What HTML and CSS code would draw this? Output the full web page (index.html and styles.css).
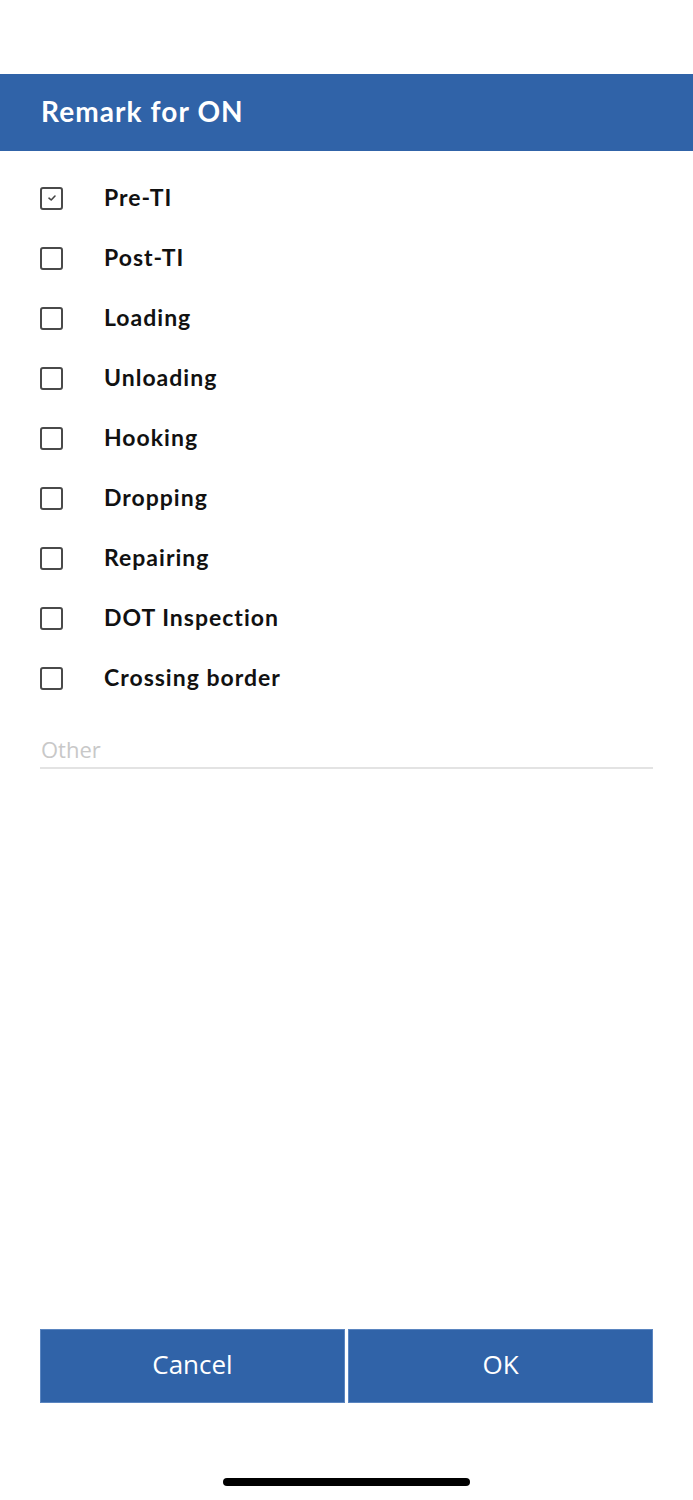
FILE: index.html
```html
<!DOCTYPE html>
<html lang="en">
<head>
    <meta charset="UTF-8">
    <meta name="viewport" content="width=device-width, initial-scale=1.0">
    <title>Remark for ON</title>
    <link rel="stylesheet" href="styles.css">
</head>
<body>
    <div class="screen">
        <div class="header">
            <div class="header-title">Remark for ON</div>
        </div>

        <div class="remark-list">
            <label class="remark-row">
                <span class="box checked">
                    <svg viewBox="0 0 10 10" width="10" height="10"><path d="M2 5.2 L4.2 7 L8 3" fill="none" stroke="#444" stroke-width="1.6" stroke-linecap="round" stroke-linejoin="round"/></svg>
                </span>
                <span class="remark-text">Pre-TI</span>
            </label>
            <label class="remark-row"><span class="box"></span><span class="remark-text">Post-TI</span></label>
            <label class="remark-row"><span class="box"></span><span class="remark-text">Loading</span></label>
            <label class="remark-row"><span class="box"></span><span class="remark-text">Unloading</span></label>
            <label class="remark-row"><span class="box"></span><span class="remark-text">Hooking</span></label>
            <label class="remark-row"><span class="box"></span><span class="remark-text">Dropping</span></label>
            <label class="remark-row"><span class="box"></span><span class="remark-text">Repairing</span></label>
            <label class="remark-row"><span class="box"></span><span class="remark-text">DOT Inspection</span></label>
            <label class="remark-row"><span class="box"></span><span class="remark-text">Crossing border</span></label>
        </div>

        <div class="other-field">
            <input type="text" placeholder="Other">
        </div>

        <div class="spacer"></div>

        <div class="actions">
            <button class="btn">Cancel</button>
            <button class="btn">OK</button>
        </div>

        <div class="home-bar"></div>
    </div>
</body>
</html>
```

FILE: styles.css
```css
* {
    margin: 0;
    padding: 0;
    box-sizing: border-box;
}

body {
    background: #fff;
    font-family: 'Lato', sans-serif;
}

.screen {
    height: 1500px;
    display: flex;
    flex-direction: column;
    padding-top: 74px;
}

.header {
    background: #3063a8;
    height: 77px;
    display: flex;
    align-items: center;
    padding: 0 0 3px 41px;
}

.header-title {
    color: #fff;
    font-size: 28px;
    font-weight: bold;
    letter-spacing: 1.1px;
}

.remark-list {
    padding: 17px 40px 0;
    display: flex;
    flex-direction: column;
}

.remark-row {
    height: 60px;
    display: flex;
    align-items: center;
}

.box {
    width: 23px;
    height: 23px;
    border: 2px solid #4a4a4a;
    border-radius: 3px;
    display: flex;
    align-items: center;
    justify-content: center;
    margin-right: 41px;
}

.remark-text {
    font-size: 23px;
    font-weight: bold;
    color: #111;
    letter-spacing: 1px;
    padding-bottom: 2px;
}

.other-field {
    padding: 25px 40px 0;
}

.other-field input {
    width: 100%;
    height: 36px;
    border: none;
    border-bottom: 2px solid #e3e3e3;
    font-family: 'Open Sans', sans-serif;
    font-size: 22px;
    padding: 0 1px 2px;
    outline: none;
}

.other-field input::placeholder {
    color: #c8c8c8;
}

.spacer {
    flex: 1;
}

.actions {
    display: flex;
    gap: 3px;
    padding: 0 40px;
}

.btn {
    flex: 1;
    height: 74px;
    background: #3063a8;
    border: 1px solid #5a85c0;
    color: #fff;
    font-family: 'Open Sans', sans-serif;
    font-size: 26px;
    padding-bottom: 4px;
}

.home-bar {
    width: 247px;
    height: 8px;
    border-radius: 4px;
    background: #000;
    margin: 75px auto 14px;
}
```
